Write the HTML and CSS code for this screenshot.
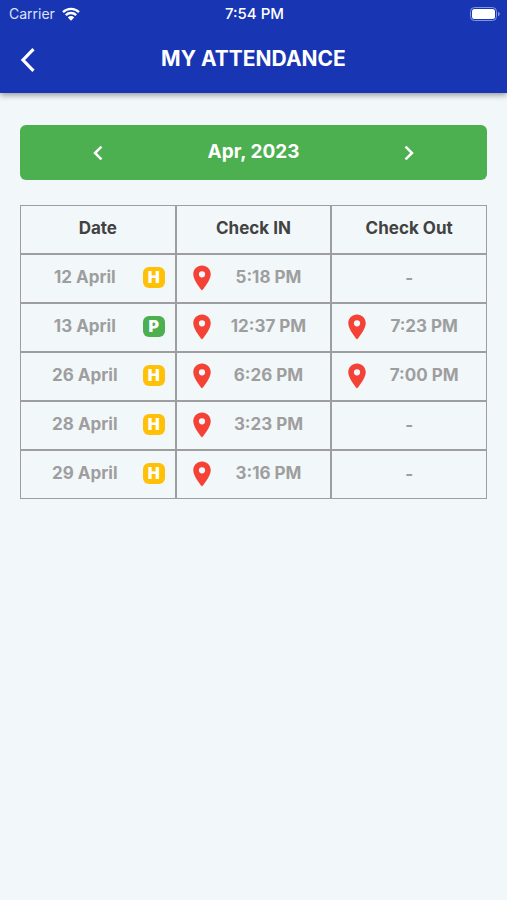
FILE: index.html
```html
<!DOCTYPE html>
<html lang="en">
<head>
<meta charset="utf-8">
<meta name="viewport" content="width=device-width, initial-scale=1">
<title>My Attendance</title>
<link rel="stylesheet" href="styles.css">
</head>
<body>
<svg class="defs" aria-hidden="true">
  <symbol id="pin" viewBox="0 0 24 24"><path d="M12 2C8.13 2 5 5.13 5 9c0 5.25 7 13 7 13s7-7.75 7-13c0-3.870-3.130-7-7-7zm0 9.500a2.500 2.500 0 1 1 0-5 2.500 2.500 0 0 1 0 5z"/></symbol>
</svg>
<header class="top">
  <div class="status">
    <div class="carrier">
      <span>Carrier</span>
      <svg class="wifi" viewBox="0 0 18 14" aria-hidden="true">
        <path d="M1 5.200a11.500 11.500 0 0 1 16 0M3.800 8.100a7.500 7.500 0 0 1 10.400 0" fill="none" stroke="currentColor" stroke-width="2.300"/>
        <path d="M5.800 10.400a4.600 4.600 0 0 1 6.400 0L9 13.700z" fill="currentColor"/>
      </svg>
    </div>
    <time class="clock">7:54 PM</time>
    <svg class="battery" viewBox="0 0 30 14" aria-hidden="true">
      <rect x=".5" y=".5" width="26" height="13" rx="4" fill="none" stroke="#8496da"/>
      <rect x="2" y="2" width="23" height="10" rx="2.500" fill="#fff"/>
      <path d="M28 4.800c2.300.8 2.300 3.600 0 4.400z" fill="#8496da"/>
    </svg>
  </div>
  <div class="bar">
    <button class="icon-btn back" type="button" aria-label="Back">
      <svg viewBox="0 0 16 24"><path d="M13.500 1.200 3 12l10.500 10.800" fill="none" stroke="currentColor" stroke-width="3.200"/></svg>
    </button>
    <h1>MY ATTENDANCE</h1>
  </div>
</header>
<main>
  <div class="month">
    <button class="icon-btn step" type="button" aria-label="Previous month">
      <svg viewBox="0 0 10 16"><path d="M8.500 1.700 2 8l6.500 6.300" fill="none" stroke="currentColor" stroke-width="2.500"/></svg>
    </button>
    <h2>Apr, 2023</h2>
    <button class="icon-btn step" type="button" aria-label="Next month">
      <svg viewBox="0 0 10 16"><path d="M1.500 1.700 8 8l-6.500 6.300" fill="none" stroke="currentColor" stroke-width="2.500"/></svg>
    </button>
  </div>
  <table>
    <thead>
      <tr><th scope="col">Date</th><th scope="col">Check IN</th><th scope="col">Check Out</th></tr>
    </thead>
    <tbody>
      <tr>
        <td><div class="day"><span>12 April</span><b class="badge half">H</b></div></td>
        <td><div class="punch"><svg><use href="#pin"/></svg><span>5:18 PM</span></div></td>
        <td>-</td>
      </tr>
      <tr>
        <td><div class="day"><span>13 April</span><b class="badge present">P</b></div></td>
        <td><div class="punch"><svg><use href="#pin"/></svg><span>12:37 PM</span></div></td>
        <td><div class="punch"><svg><use href="#pin"/></svg><span>7:23 PM</span></div></td>
      </tr>
      <tr>
        <td><div class="day"><span>26 April</span><b class="badge half">H</b></div></td>
        <td><div class="punch"><svg><use href="#pin"/></svg><span>6:26 PM</span></div></td>
        <td><div class="punch"><svg><use href="#pin"/></svg><span>7:00 PM</span></div></td>
      </tr>
      <tr>
        <td><div class="day"><span>28 April</span><b class="badge half">H</b></div></td>
        <td><div class="punch"><svg><use href="#pin"/></svg><span>3:23 PM</span></div></td>
        <td>-</td>
      </tr>
      <tr>
        <td><div class="day"><span>29 April</span><b class="badge half">H</b></div></td>
        <td><div class="punch"><svg><use href="#pin"/></svg><span>3:16 PM</span></div></td>
        <td>-</td>
      </tr>
    </tbody>
  </table>
</main>
</body>
</html>
```
FILE: styles.css
```css
* {
  box-sizing: border-box;
}

body {
  margin: 0;
  min-height: 100vh;
  background: #f2f7fa;
  font-family: Inter, "Liberation Sans", sans-serif;
  color: #424242;
}

.defs {
  position: absolute;
  width: 0;
  height: 0;
}

svg {
  display: block;
}

h1,
h2 {
  margin: 0;
}

.top {
  background: #1835b3;
  color: #fff;
  box-shadow: 0 2px 6px rgba(0, 0, 0, 0.4);
}

.status {
  display: grid;
  grid-template-columns: 1fr auto 1fr;
  align-items: center;
  height: 26px;
  padding: 2px 7px 0 9px;
  font-size: 14px;
  line-height: 20px;
}

.carrier {
  display: flex;
  align-items: center;
  gap: 7px;
  color: #dde3f8;
}

.wifi {
  width: 18px;
  height: 14px;
  color: #fff;
}

.clock {
  font-size: 15px;
  font-weight: 500;
}

.battery {
  justify-self: end;
  width: 30px;
  height: 14px;
}

.bar {
  display: grid;
  grid-template-columns: 48px 1fr 48px;
  align-items: center;
  height: 67px;
}

.bar h1 {
  padding-bottom: 2px;
  font-size: 21px;
  line-height: 28px;
  font-weight: 700;
  text-align: center;
}

.icon-btn {
  display: grid;
  place-items: center;
  padding: 0;
  border: 0;
  background: none;
  color: inherit;
}

.back {
  height: 48px;
  padding-left: 8px;
}

.back svg {
  width: 16px;
  height: 24px;
}

main {
  padding: 32px 20px;
}

.month {
  display: grid;
  grid-template-columns: repeat(3, 1fr);
  align-items: center;
  height: 55px;
  margin-bottom: 25px;
  border-radius: 6px;
  background: #4caf50;
  color: #fff;
}

.month h2 {
  padding-bottom: 2px;
  font-size: 19px;
  line-height: 24px;
  text-align: center;
}

.step {
  height: 48px;
}

.step svg {
  width: 10px;
  height: 16px;
}

table {
  width: 100%;
  table-layout: fixed;
  border: 0;
  border-collapse: separate;
  border-spacing: 0;
}

th,
td {
  height: 49px;
  padding: 0 0 2px;
  border: 1px solid #9e9e9e;
  font-size: 17px;
  line-height: 22px;
  font-weight: 700;
  text-align: center;
}

th {
  padding-bottom: 4px;
}

td {
  color: #9e9e9e;
}

.day,
.punch {
  display: flex;
  align-items: center;
}

.day {
  padding: 0 10px 0 6px;
}

.day span,
.punch span {
  flex: 1;
  padding-bottom: 2px;
}

.badge {
  width: 22px;
  height: 21px;
  border-radius: 6px;
  color: #fff;
  font-size: 16px;
  line-height: 20px;
  font-weight: 900;
}

.half {
  background: #ffc107;
}

.present {
  background: #4caf50;
}

.punch {
  padding: 0 10px;
}

.punch svg {
  width: 30px;
  height: 30px;
  fill: #f44336;
}
```
